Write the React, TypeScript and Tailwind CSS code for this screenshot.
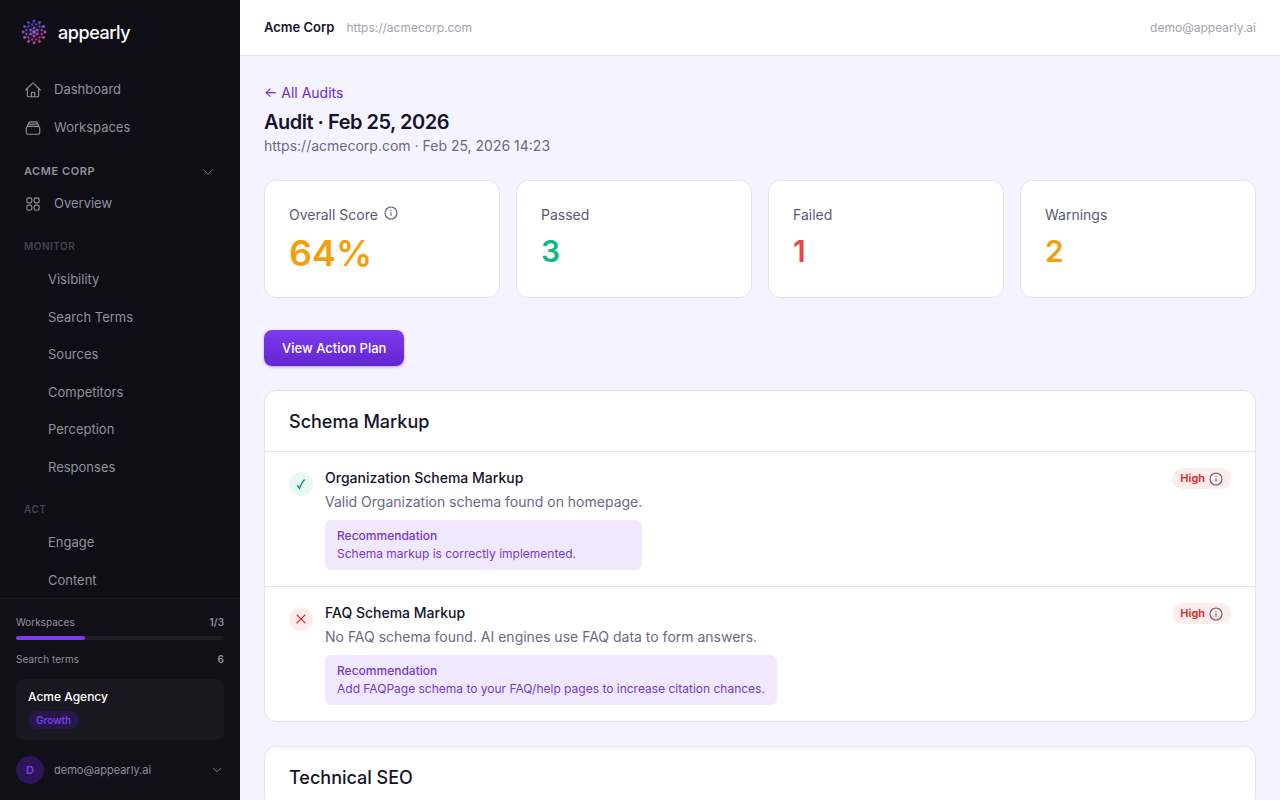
import React from 'react';
import {
    HiOutlineHome,
    HiOutlineRectangleStack,
    HiOutlineSquares2X2,
    HiOutlineChevronDown,
} from 'react-icons/hi2';

type Status = 'pass' | 'fail';

interface Check {
    title: string;
    status: Status;
    detail: string;
    recommendation: string;
    priority: string;
}

const monitorLinks = ['Visibility', 'Search Terms', 'Sources', 'Competitors', 'Perception', 'Responses'];
const actLinks = ['Engage', 'Content'];

const stats = [
    { label: 'Overall Score', value: '64%', className: 'text-4xl leading-[46px] text-[#f59e0b]', info: true },
    { label: 'Passed', value: '3', className: 'text-3xl leading-[42px] text-[#10b981]' },
    { label: 'Failed', value: '1', className: 'text-3xl leading-[42px] text-[#ef4444]' },
    { label: 'Warnings', value: '2', className: 'text-3xl leading-[42px] text-[#f59e0b]' },
];

const schemaChecks: Check[] = [
    {
        title: 'Organization Schema Markup',
        status: 'pass',
        detail: 'Valid Organization schema found on homepage.',
        recommendation: 'Schema markup is correctly implemented.',
        priority: 'High',
    },
    {
        title: 'FAQ Schema Markup',
        status: 'fail',
        detail: 'No FAQ schema found. AI engines use FAQ data to form answers.',
        recommendation: 'Add FAQPage schema to your FAQ/help pages to increase citation chances.',
        priority: 'High',
    },
];

const ring = (count: number, radius: number, offset: number) =>
    Array.from({ length: count }, (_, i) => {
        const a = ((i * 360) / count + offset) * (Math.PI / 180);
        return { x: 14 + radius * Math.cos(a), y: 14 + radius * Math.sin(a) };
    });

const inner = ring(6, 4, 30);
const middle = ring(12, 7.8, 15);
const outer = ring(12, 11, 0);

const Logo: React.FC = () => (
    <svg width="28" height="28" viewBox="0 0 28 28" aria-hidden="true">
        <defs>
            <linearGradient id="logo" x1="9" y1="3" x2="18" y2="25" gradientUnits="userSpaceOnUse">
                <stop offset="0" stopColor="#3a43cf" />
                <stop offset="0.5" stopColor="#9a58cc" />
                <stop offset="1" stopColor="#c43a6c" />
            </linearGradient>
        </defs>
        <g stroke="url(#logo)" strokeWidth="0.5" opacity="0.7" fill="none">
            {outer.map((p, i) => (
                <path key={i} d={`M14 14 L${p.x} ${p.y + 0.01}`} />
            ))}
            <path d={`M${inner.map((p) => `${p.x} ${p.y}`).join('L')}Z`} />
            <path d={`M${middle.map((p, i) => `${outer[i].x} ${outer[i].y}L${p.x} ${p.y}`).join('L')}Z`} />
        </g>
        <g fill="url(#logo)">
            <circle cx="14" cy="14" r="1.8" />
            {inner.map((p, i) => <circle key={i} cx={p.x} cy={p.y} r="1.3" />)}
            {middle.map((p, i) => <circle key={i} cx={p.x} cy={p.y} r="1" />)}
            {outer.map((p, i) => <circle key={i} cx={p.x} cy={p.y} r="1.4" />)}
        </g>
    </svg>
);

const InfoIcon: React.FC = () => (
    <svg width="14" height="14" viewBox="0 0 14 14" fill="none" stroke="currentColor" strokeWidth="1.1" aria-hidden="true">
        <circle cx="7" cy="7" r="6" />
        <path d="M7 6.3v3.4M7 4v1.1" />
    </svg>
);

const StatusIcon: React.FC<{ status: Status }> = ({ status }) => (
    <span
        className={
            status === 'pass'
                ? 'mt-[5px] flex size-6 shrink-0 items-center justify-center rounded-full bg-[#e7f8f2] text-[#059669]'
                : 'mt-[5px] flex size-6 shrink-0 items-center justify-center rounded-full bg-[#fdecec] text-[#dc2626]'
        }
    >
        <svg width="12" height="12" viewBox="0 0 12 12" fill="none" stroke="currentColor" aria-hidden="true">
            {status === 'pass' ? (
                <path d="M2.2 7.2 4.5 10.2Q6 5.5 9.6 1.5" strokeWidth="1.4" />
            ) : (
                <path d="M1.6 1.6l8.8 8.8M10.4 1.6l-8.8 8.8" strokeWidth="1.2" />
            )}
        </svg>
    </span>
);

const NavLink: React.FC<{ label: string; icon: React.ReactNode }> = ({ label, icon }) => (
    <a href="#" className="flex h-[38px] items-center gap-3 px-6 text-[13px]">
        {icon}
        {label}
    </a>
);

const NavGroup: React.FC<{ title: string; children: React.ReactNode }> = ({ title, children }) => (
    <>
        <h2 className="mt-[15px] px-6 text-[10px] leading-4 font-semibold tracking-wider text-[#45444e]">{title}</h2>
        {children}
    </>
);

const SubLink: React.FC<{ label: string }> = ({ label }) => (
    <li className="flex items-center pl-12">
        <a href="#">{label}</a>
    </li>
);

const Sidebar: React.FC = () => (
    <aside className="flex w-60 shrink-0 flex-col bg-[#0f0e17] text-[#92919a]">
        <div className="flex min-h-0 flex-1 flex-col overflow-hidden">
            <a href="#" className="flex h-16 shrink-0 items-center gap-2.5 px-5 text-white">
                <Logo />
                <span className="pt-0.5 text-lg font-medium tracking-tight">appearly</span>
            </a>
            <nav className="pt-[7px]" aria-label="Main">
                <NavLink label="Dashboard" icon={<HiOutlineHome className="size-[18px]" />} />
                <NavLink label="Workspaces" icon={<HiOutlineRectangleStack className="size-[18px]" />} />
                <button className="mt-[11px] flex h-[27px] w-full items-center justify-between px-6 text-[11px] font-semibold tracking-wider">
                    ACME CORP
                    <HiOutlineChevronDown className="mr-px size-3.5" />
                </button>
                <NavLink label="Overview" icon={<HiOutlineSquares2X2 className="size-[18px]" />} />
                <NavGroup title="MONITOR">
                    <ul className="mt-[7px] grid h-[225px] grid-rows-6 text-[13px]">
                        {monitorLinks.map((label) => (
                            <SubLink key={label} label={label} />
                        ))}
                    </ul>
                </NavGroup>
                <NavGroup title="ACT">
                    <ul className="mt-[7px] grid h-[75px] grid-rows-2 text-[13px]">
                        {actLinks.map((label) => (
                            <SubLink key={label} label={label} />
                        ))}
                    </ul>
                </NavGroup>
            </nav>
        </div>
        <div className="border-t border-[#1d1c25] bg-[#111019] px-4 pt-[15px] pb-4 text-[11px] leading-4">
            <div className="flex justify-between text-[10px]">
                <span>Workspaces</span>
                <span className="font-semibold">1/3</span>
            </div>
            <div className="mt-1.5 h-1 rounded-full bg-[#1f1e27]">
                <div className="h-1 w-1/3 rounded-full bg-[#7c3aed]" />
            </div>
            <div className="mt-[11px] flex justify-between text-[10px]">
                <span>Search terms</span>
                <span className="font-semibold">6</span>
            </div>
            <div className="mt-3 h-[61px] rounded-lg bg-[#191820] px-3 pt-2">
                <p className="text-xs leading-5 font-medium text-white">Acme Agency</p>
                <span className="mt-1 inline-block rounded-full bg-[#26174a] px-2 py-px text-[10px] font-semibold text-[#7c3aed]">Growth</span>
            </div>
            <button className="mt-4 flex h-7 w-full items-center gap-2.5">
                <span className="flex size-7 items-center justify-center rounded-full bg-[#2c1658] font-semibold text-[#7c3aed]">D</span>
                <span>demo@appearly.ai</span>
                <HiOutlineChevronDown className="mr-px ml-auto size-3" />
            </button>
        </div>
    </aside>
);

const CheckRow: React.FC<{ check: Check }> = ({ check }) => (
    <li className="flex items-start gap-3 border-t border-[#e5e4ee] px-6 pt-[15px] pb-4">
        <StatusIcon status={check.status} />
        <div>
            <h3 className="text-sm leading-[22px] font-medium text-[#15132b]">{check.title}</h3>
            <p className="mt-0.5 text-sm leading-[22px] text-[#6b6980]">{check.detail}</p>
            <div className="mt-[7px] rounded-md bg-[#f0e8fc] px-3 py-[7px] text-xs leading-[18px] text-[#7539d0]">
                <p className="font-medium">Recommendation</p>
                <p>{check.recommendation}</p>
            </div>
        </div>
        <span className="mt-px ml-auto flex h-[21px] items-center gap-1 rounded-full bg-[#fdecec] px-2 text-[11px] font-semibold text-[#dc2626]">
            {check.priority}
            <button className="text-[#6b5a74]" aria-label="About priority">
                <InfoIcon />
            </button>
        </span>
    </li>
);

const Section: React.FC<{ title: string; checks: Check[] }> = ({ title, checks }) => (
    <section className="mt-6 rounded-xl border border-[#e5e2f3] bg-white">
        <h2 className="flex h-[60px] items-center px-6 pt-0.5 text-lg font-medium text-[#15132b]">{title}</h2>
        <ul>
            {checks.map((check) => (
                <CheckRow key={check.title} check={check} />
            ))}
        </ul>
    </section>
);

const App: React.FC = () => {
    return (
        <div className="flex h-screen overflow-hidden bg-[#f5f3ff] font-[Inter,sans-serif]">
            <Sidebar />
            <div className="flex min-w-0 flex-1 flex-col overflow-hidden">
                <header className="flex h-14 shrink-0 items-center gap-3 border-b border-[#e5e2f3] bg-white px-6 text-xs">
                    <span className="text-[13px] font-semibold text-[#15132b]">Acme Corp</span>
                    <a href="#" className="text-[#a3a2ad]">https://acmecorp.com</a>
                    <span className="ml-auto text-[#a3a2ad]">demo@appearly.ai</span>
                </header>
                <main className="flex-1 overflow-hidden px-6 pt-[26px]">
                    <a href="#" className="block text-sm leading-[22px] text-[#6d28d9]">← All Audits</a>
                    <h1 className="mt-1 text-xl leading-7 font-semibold tracking-tight text-[#15132b]">Audit · Feb 25, 2026</h1>
                    <p className="text-sm leading-5 text-[#6b6980]">https://acmecorp.com · Feb 25, 2026 14:23</p>
                    <div className="mt-6 grid grid-cols-4 gap-4">
                        {stats.map((stat) => (
                            <div key={stat.label} className="h-[118px] rounded-xl border border-[#e5e2f3] bg-white px-6 pt-[23px]">
                                <p className="flex gap-1.5 text-sm leading-[22px] text-[#5b5875]">
                                    {stat.label}
                                    {stat.info && (
                                        <button className="flex pt-0.5" aria-label="About this score">
                                            <InfoIcon />
                                        </button>
                                    )}
                                </p>
                                <p className={`mt-1 font-semibold ${stat.className}`}>{stat.value}</p>
                            </div>
                        ))}
                    </div>
                    <button className="mt-8 flex h-9 items-center rounded-lg bg-linear-to-b from-[#7c3aed] to-[#6426d0] px-[18px] pt-px text-[13px] font-medium text-white shadow-sm shadow-[#7c3aed]/40">
                        View Action Plan
                    </button>
                    <Section title="Schema Markup" checks={schemaChecks} />
                    <Section title="Technical SEO" checks={[]} />
                </main>
            </div>
        </div>
    );
};

export default App;
